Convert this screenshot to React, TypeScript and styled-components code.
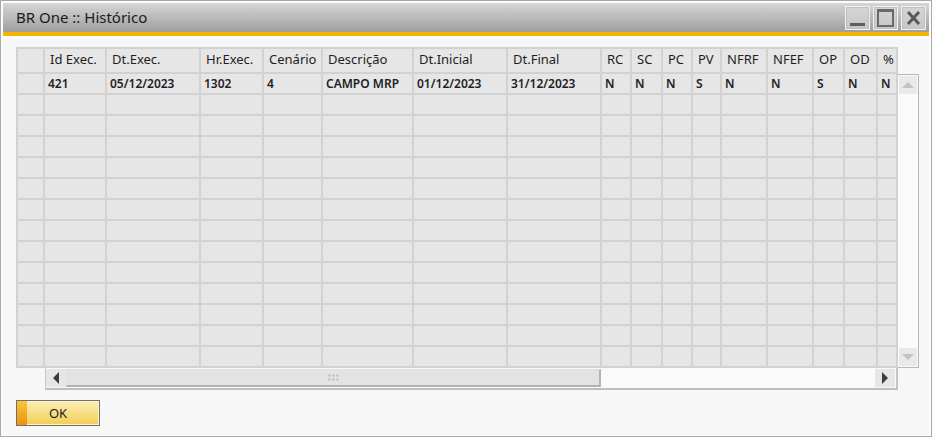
import React from "react";
import styled, { createGlobalStyle } from "styled-components";

const Global = createGlobalStyle`
  html, body { margin: 0; padding: 0; background: #fdfdfd; }
  body { font-family: "Noto Sans", "Open Sans", sans-serif; }
`;

const COLS = [27, 62, 94, 63, 59, 91, 94, 94, 30, 31, 30, 29, 46, 46, 31, 33, 20];
const HEADERS = ["", "Id Exec.", "Dt.Exec.", "Hr.Exec.", "Cenário", "Descrição", "Dt.Inicial", "Dt.Final", "RC", "SC", "PC", "PV", "NFRF", "NFEF", "OP", "OD", "%"];
const ROW1 = ["", "421", "05/12/2023", "1302", "4", "CAMPO MRP", "01/12/2023", "31/12/2023", "N", "N", "N", "S", "N", "N", "S", "N", "N"];
const ROWS = 14;

const Window = styled.div`
  width: 932px;
  height: 437px;
  box-sizing: border-box;
  border: 1px solid #a9a9a9;
  padding: 2px 2px 1px 2px;
  background: #fbfbfb;
  display: flex;
  flex-direction: column;
`;

const TitleBar = styled.div`
  height: 29px;
  flex: none;
  display: flex;
  align-items: flex-start;
  justify-content: space-between;
  background: linear-gradient(#d6d6d6 0%, #bdbdbd 45%, #9e9e9e 100%);
  padding: 0 3px 0 13px;
`;

const Title = styled.div`
  font-size: 15px;
  line-height: 29px;
  color: #1b1b1b;
`;

const TitleButtons = styled.div`
  display: flex;
  gap: 3px;
  padding-top: 3px;
`;

const WinButton = styled.div`
  width: 25px;
  height: 24px;
  box-sizing: border-box;
  border: 1px solid #f2f2f2;
  background: linear-gradient(#d6d6d6, #c6c6c6);
  box-shadow: inset 0 0 0 1px #c0c0c0;
  display: flex;
  align-items: center;
  justify-content: center;
`;

const Accent = styled.div`
  height: 4px;
  flex: none;
  background: #f6b300;
`;

const Body = styled.div`
  flex: 1;
  background: #f7f7f7;
  border-top: 2px solid #ffffff;
  padding: 9px 0 0 13px;
  display: flex;
  flex-direction: column;
`;

const Frame = styled.div`
  display: grid;
  grid-template-columns: 882px 21px;
  grid-template-rows: 27px 294px 22px;
`;

const Table = styled.div`
  grid-column: 1;
  grid-row: 1 / 3;
  display: grid;
  grid-template-columns: ${COLS.map((c) => c + "px").join(" ")};
  grid-template-rows: 25px repeat(${ROWS}, 21px);
  border-top: 2px solid #d2d2d2;
  border-left: 2px solid #d2d2d2;
  overflow: hidden;
`;

const Cell = styled.div<{ $head?: boolean }>`
  box-sizing: border-box;
  background: #e6e6e6;
  border-right: 2px solid #d2d2d2;
  border-bottom: 2px solid #d2d2d2;
  color: #1e1e24;
  white-space: nowrap;
  overflow: hidden;
  font-size: ${(p) => (p.$head ? "13px" : "12px")};
  font-weight: ${(p) => (p.$head ? 400 : 600)};
  padding: ${(p) => (p.$head ? "1px 0 0 5px" : "0 0 0 3px")};
  line-height: 19px;
`;

const VScroll = styled.div`
  grid-column: 2;
  grid-row: 2;
  box-sizing: border-box;
  background: #fafafa;
  border: 1px solid #b5b5b5;
  border-left: none;
  display: flex;
  flex-direction: column;
  justify-content: space-between;
  padding: 1px;
`;

const VArrow = styled.div`
  height: 18px;
  background: #e9e9e9;
  display: flex;
  align-items: center;
  justify-content: center;
`;

const HScroll = styled.div`
  grid-column: 1;
  grid-row: 3;
  margin-left: 29px;
  box-sizing: border-box;
  background: #fafafa;
  border-left: 1px solid #c8c8c8;
  border-bottom: 2px solid #bdbdbd;
  border-right: 2px solid #c4c4c4;
  display: flex;
  align-items: stretch;
  padding: 1px 1px 1px 0;
`;

const HArrow = styled.div`
  width: 20px;
  background: #e6e6e6;
  display: flex;
  align-items: center;
  justify-content: center;
`;

const Thumb = styled.div`
  width: 535px;
  box-sizing: border-box;
  background: #e3e3e3;
  border: 1px solid #e0e0e0;
  border-right: 2px solid #b3b3b3;
  border-bottom: 2px solid #b3b3b3;
  display: flex;
  align-items: center;
  justify-content: center;
`;

const Track = styled.div`
  flex: 1;
`;

const Footer = styled.div`
  padding-top: 10px;
`;

const OkButton = styled.div`
  width: 84px;
  height: 26px;
  box-sizing: border-box;
  border: 1px solid #6f6f6f;
  display: flex;
  background: linear-gradient(#fbeeb5, #f7dc80 55%, #f3cd52);
  box-shadow: inset 0 0 0 1px #fff4c8;
`;

const OkStrip = styled.div`
  width: 10px;
  background: linear-gradient(#f8c73c, #ef8f0c);
`;

const OkLabel = styled.div`
  flex: 1;
  text-align: center;
  font-size: 13px;
  line-height: 24px;
  color: #1b1b1b;
  padding-right: 10px;
`;

const Tri = ({ dir, color }: { dir: "up" | "down" | "left" | "right"; color: string }) => {
  const pts =
    dir === "up" ? "0,6 6,0 12,6" : dir === "down" ? "0,0 12,0 6,6" : dir === "left" ? "6,0 6,12 0,6" : "0,0 0,12 6,6";
  const w = dir === "up" || dir === "down" ? 12 : 6;
  const h = dir === "up" || dir === "down" ? 6 : 12;
  return (
    <svg width={w} height={h} viewBox={`0 0 ${w} ${h}`}>
      <polygon points={pts} fill={color} />
    </svg>
  );
};

const Grip = () => (
  <svg width="11" height="7" viewBox="0 0 11 7">
    {[0, 4, 8].map((x) =>
      [0, 4].map((y) => <rect key={`${x}-${y}`} x={x + 0.5} y={y + 0.5} width="2" height="2" fill="#b8b8b8" />)
    )}
  </svg>
);

export default function App() {
  const rows: string[][] = [HEADERS, ROW1];
  for (let i = 1; i < ROWS; i++) rows.push(COLS.map(() => ""));
  return (
    <>
      <Global />
      <Window>
        <TitleBar>
          <Title>BR One :: Histórico</Title>
          <TitleButtons>
            <WinButton>
              <svg width="17" height="18" viewBox="0 0 17 18">
                <rect x="1" y="14" width="15" height="3" fill="#5e5e5e" />
              </svg>
            </WinButton>
            <WinButton>
              <svg width="17" height="18" viewBox="0 0 17 18">
                <rect x="1" y="1" width="15" height="16" fill="none" stroke="#6a6a6a" strokeWidth="2" />
                <rect x="1" y="1" width="15" height="2" fill="#6a6a6a" />
              </svg>
            </WinButton>
            <WinButton>
              <svg width="15" height="14" viewBox="0 0 15 14">
                <path d="M2 1 L13 13 M13 1 L2 13" stroke="#5a5a5a" strokeWidth="3" />
              </svg>
            </WinButton>
          </TitleButtons>
        </TitleBar>
        <Accent />
        <Body>
          <Frame>
            <Table>
              {rows.map((r, ri) =>
                r.map((v, ci) => (
                  <Cell key={`${ri}-${ci}`} $head={ri === 0}>
                    {v}
                  </Cell>
                ))
              )}
            </Table>
            <VScroll>
              <VArrow>
                <Tri dir="up" color="#c4c4c4" />
              </VArrow>
              <VArrow>
                <Tri dir="down" color="#c4c4c4" />
              </VArrow>
            </VScroll>
            <HScroll>
              <HArrow>
                <Tri dir="left" color="#3c3c3c" />
              </HArrow>
              <Thumb>
                <Grip />
              </Thumb>
              <Track />
              <HArrow>
                <Tri dir="right" color="#3c3c3c" />
              </HArrow>
            </HScroll>
          </Frame>
          <Footer>
            <OkButton>
              <OkStrip />
              <OkLabel>OK</OkLabel>
            </OkButton>
          </Footer>
        </Body>
      </Window>
    </>
  );
}
